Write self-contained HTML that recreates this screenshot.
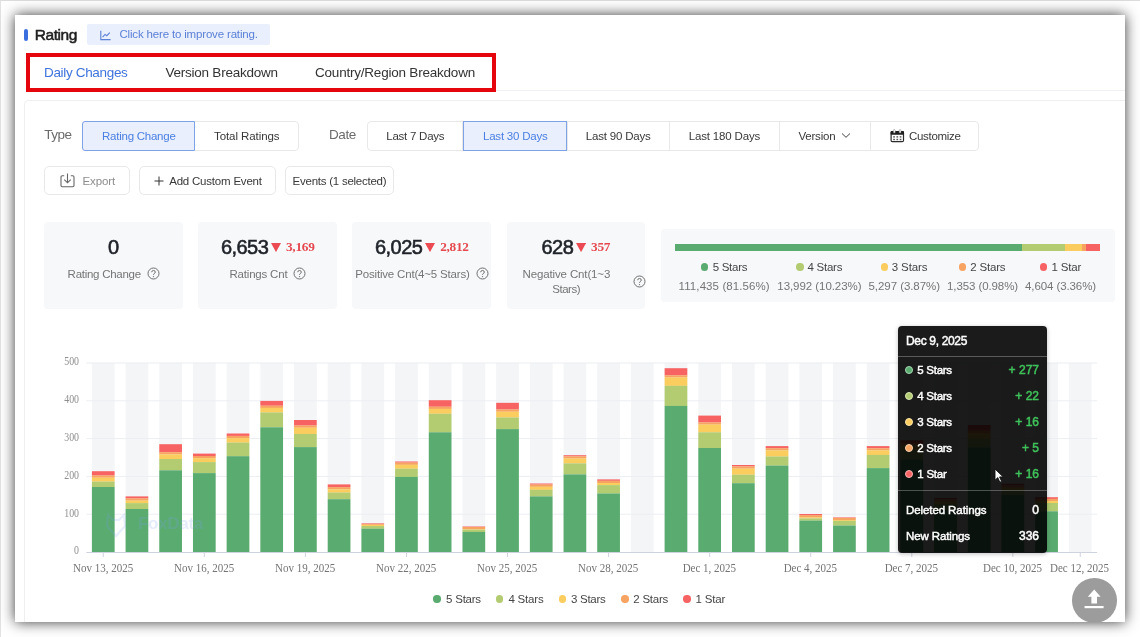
<!DOCTYPE html>
<html lang="en"><head><meta charset="utf-8"><title>Rating</title>
<style>
html,body{margin:0;padding:0}
body{width:1140px;height:637px;overflow:hidden;background:#fff;position:relative;font-family:"Liberation Sans", sans-serif}
.frame{position:absolute;left:0;top:0;width:1140px;height:637px;box-sizing:border-box;border-top:1px solid #dcdcdc;border-left:1px solid #e2e2e2}
.shadow{position:absolute;left:15px;top:15px;width:1110.4px;height:607px;background:#fff;box-shadow:0 0 13px rgba(0,0,0,0.78)}
.clip{position:absolute;left:15px;top:15px;width:1110.4px;height:607px;overflow:hidden}
.inner{position:absolute;left:-15px;top:-15px;width:1140px;height:637px;filter:blur(0.4px)}
.t{position:absolute;white-space:nowrap;line-height:20px;height:20px}
.z3{z-index:3} .z7{z-index:7}
</style></head><body>
<div class="frame"></div>
<div class="shadow"></div>
<div class="clip"><div class="inner">
<div style='position:absolute;left:24.3px;top:28.5px;width:3.5px;height:12px;border-radius:2px;background:#3b6fe0'></div>
<div style='position:absolute;left:86.7px;top:24.3px;width:183.8px;height:21.2px;border-radius:2px;background:#e9effc'></div>
<svg style='position:absolute;left:100px;top:29.5px' width='11' height='11' viewBox='0 0 11 11'><path d='M0.8 0.8V9.6H10.6' fill='none' stroke='#5b80d6' stroke-width='1.1'/><path d='M2.6 7.2L5 4.4L6.8 5.7L9.8 2.6' fill='none' stroke='#5b80d6' stroke-width='1.1'/></svg>
<div style='position:absolute;left:495px;top:90px;width:640px;height:1px;background:#f0f0f7'></div>
<div style='position:absolute;left:23.8px;top:100px;width:1110px;height:560px;border:1px solid #efefef;border-radius:4px'></div>
<div style='position:absolute;left:26px;top:53.1px;width:469.6px;height:39.4px;box-sizing:border-box;border:4.4px solid #e5050c'></div>
<div style='position:absolute;left:194px;top:121.4px;width:104.69999999999999px;height:29.599999999999994px;box-sizing:border-box;border:1px solid #e8e8e8;background:#fff;border-radius:0 4px 4px 0'></div>
<div style='position:absolute;left:82.2px;top:121.4px;width:112.8px;height:29.599999999999994px;box-sizing:border-box;border:1px solid #7fa2e6;background:#e9effd;border-radius:3px 0 0 3px;z-index:2'></div>
<div style='position:absolute;left:366.6px;top:121.4px;width:96.89999999999998px;height:29.599999999999994px;box-sizing:border-box;border:1px solid #e8e8e8;background:#fff;border-radius:4px 0 0 4px'></div>
<div style='position:absolute;left:566.5px;top:121.4px;width:103.5px;height:29.599999999999994px;box-sizing:border-box;border:1px solid #e8e8e8;background:#fff;border-radius:0'></div>
<div style='position:absolute;left:669px;top:121.4px;width:111px;height:29.599999999999994px;box-sizing:border-box;border:1px solid #e8e8e8;background:#fff;border-radius:0'></div>
<div style='position:absolute;left:779px;top:121.4px;width:92px;height:29.599999999999994px;box-sizing:border-box;border:1px solid #e8e8e8;background:#fff;border-radius:0'></div>
<div style='position:absolute;left:870px;top:121.4px;width:109.29999999999995px;height:29.599999999999994px;box-sizing:border-box;border:1px solid #e8e8e8;background:#fff;border-radius:0 4px 4px 0'></div>
<div style='position:absolute;left:463px;top:121.4px;width:104px;height:29.599999999999994px;box-sizing:border-box;border:1px solid #7fa2e6;background:#e9effd;border-radius:0;z-index:2'></div>
<svg style='position:absolute;left:841px;top:132px' width='10' height='7' viewBox='0 0 10 7'><path d='M1 1.5L5 5.3L9 1.5' fill='none' stroke='#444' stroke-width='1'/></svg>
<svg style='position:absolute;left:889.5px;top:129px' width='15' height='14' viewBox='0 0 15 14'>
<rect x='1.1' y='2.6' width='12.4' height='10' rx='1.2' fill='#fff' stroke='#2b2b2b' stroke-width='1.2'/>
<rect x='0.6' y='2.1' width='13.4' height='3.6' rx='1' fill='#1e1e1e'/>
<rect x='3.4' y='0.6' width='1.8' height='3.4' rx='0.8' fill='#fff' stroke='#777' stroke-width='0.5'/><rect x='9.2' y='0.6' width='1.8' height='3.4' rx='0.8' fill='#fff' stroke='#777' stroke-width='0.5'/>
<g fill='#555'><rect x='3.2' y='7.2' width='1.7' height='1.4'/><rect x='6.45' y='7.2' width='1.7' height='1.4'/><rect x='9.7' y='7.2' width='1.7' height='1.4'/>
<rect x='3.2' y='9.8' width='1.7' height='1.4'/><rect x='6.45' y='9.8' width='1.7' height='1.4'/><rect x='9.7' y='9.8' width='1.7' height='1.4'/></g></svg>
<div style='position:absolute;left:44.2px;top:166px;width:85.8px;height:29px;box-sizing:border-box;border:1px solid #e8e8e8;background:#fff;border-radius:5px'></div>
<div style='position:absolute;left:138.5px;top:166px;width:137.8px;height:29px;box-sizing:border-box;border:1px solid #e8e8e8;background:#fff;border-radius:5px'></div>
<div style='position:absolute;left:284.7px;top:166px;width:109.30000000000001px;height:29px;box-sizing:border-box;border:1px solid #e8e8e8;background:#fff;border-radius:5px'></div>
<svg style='position:absolute;left:59.5px;top:173px' width='15' height='15' viewBox='0 0 15 15'>
<path d='M4.2 2.8H2.2Q1 2.8 1 4V12.6Q1 13.8 2.2 13.8H12.8Q14 13.8 14 12.6V4Q14 2.8 12.8 2.8H10.8' fill='none' stroke='#666' stroke-width='1.1'/>
<path d='M7.5 0.5V9.6M4.3 6.6L7.5 9.8L10.7 6.6' fill='none' stroke='#666' stroke-width='1.1'/></svg>
<svg style='position:absolute;left:153.5px;top:176px' width='10' height='10' viewBox='0 0 10 10'><path d='M5 0.5V9.5M0.5 5H9.5' stroke='#333' stroke-width='1' fill='none'/></svg>
<div style='position:absolute;left:44px;top:222.3px;width:139.3px;height:86.69999999999999px;background:#f7f8fa;border-radius:4px'></div>
<div style='position:absolute;left:198px;top:222.3px;width:139.3px;height:86.69999999999999px;background:#f7f8fa;border-radius:4px'></div>
<div style='position:absolute;left:352.3px;top:222.3px;width:138.7px;height:86.69999999999999px;background:#f7f8fa;border-radius:4px'></div>
<div style='position:absolute;left:507.3px;top:222.3px;width:138.2px;height:86.69999999999999px;background:#f7f8fa;border-radius:4px'></div>
<div style='position:absolute;left:661.3px;top:229.3px;width:453.29999999999995px;height:72.39999999999998px;background:#f7f8fa;border-radius:4px'></div>
<svg style='position:absolute;left:147.2px;top:267.1px' width='13' height='13' viewBox='0 0 13 13'><circle cx='6.5' cy='6.5' r='5.5' fill='none' stroke='#6e6e6e' stroke-width='1'/><path d='M4.7 5.2Q4.7 3.5 6.5 3.5Q8.3 3.5 8.3 5.1Q8.3 6.1 7.2 6.6Q6.5 7 6.5 7.9' fill='none' stroke='#6e6e6e' stroke-width='1'/><circle cx='6.5' cy='9.6' r='0.7' fill='#6e6e6e'/></svg>
<svg style='position:absolute;left:270.8px;top:242.6px' width='10.0' height='9.200000000000017' viewBox='0 0 10 9'><path d='M0 0H10L5 9Z' fill='#ec4a52'/></svg>
<svg style='position:absolute;left:293.4px;top:267.1px' width='13' height='13' viewBox='0 0 13 13'><circle cx='6.5' cy='6.5' r='5.5' fill='none' stroke='#6e6e6e' stroke-width='1'/><path d='M4.7 5.2Q4.7 3.5 6.5 3.5Q8.3 3.5 8.3 5.1Q8.3 6.1 7.2 6.6Q6.5 7 6.5 7.9' fill='none' stroke='#6e6e6e' stroke-width='1'/><circle cx='6.5' cy='9.6' r='0.7' fill='#6e6e6e'/></svg>
<svg style='position:absolute;left:424.7px;top:242.6px' width='10.0' height='9.200000000000017' viewBox='0 0 10 9'><path d='M0 0H10L5 9Z' fill='#ec4a52'/></svg>
<svg style='position:absolute;left:476.1px;top:267.1px' width='13' height='13' viewBox='0 0 13 13'><circle cx='6.5' cy='6.5' r='5.5' fill='none' stroke='#6e6e6e' stroke-width='1'/><path d='M4.7 5.2Q4.7 3.5 6.5 3.5Q8.3 3.5 8.3 5.1Q8.3 6.1 7.2 6.6Q6.5 7 6.5 7.9' fill='none' stroke='#6e6e6e' stroke-width='1'/><circle cx='6.5' cy='9.6' r='0.7' fill='#6e6e6e'/></svg>
<svg style='position:absolute;left:576.2px;top:242.6px' width='10.099999999999909' height='9.200000000000017' viewBox='0 0 10 9'><path d='M0 0H10L5 9Z' fill='#ec4a52'/></svg>
<svg style='position:absolute;left:632.7px;top:274.5px' width='13' height='13' viewBox='0 0 13 13'><circle cx='6.5' cy='6.5' r='5.5' fill='none' stroke='#6e6e6e' stroke-width='1'/><path d='M4.7 5.2Q4.7 3.5 6.5 3.5Q8.3 3.5 8.3 5.1Q8.3 6.1 7.2 6.6Q6.5 7 6.5 7.9' fill='none' stroke='#6e6e6e' stroke-width='1'/><circle cx='6.5' cy='9.6' r='0.7' fill='#6e6e6e'/></svg>
<div style='position:absolute;left:675px;top:243.6px;width:346.9px;height:7.6px;background:#5aab70'></div>
<div style='position:absolute;left:1021.6px;top:243.6px;width:43.8px;height:7.6px;background:#b3cc71'></div>
<div style='position:absolute;left:1065.1px;top:243.6px;width:16.7px;height:7.6px;background:#facd5e'></div>
<div style='position:absolute;left:1081.5px;top:243.6px;width:4.5px;height:7.6px;background:#f7a362'></div>
<div style='position:absolute;left:1085.7px;top:243.6px;width:14.6px;height:7.6px;background:#f76363'></div>
<div style='position:absolute;left:700.9px;top:263.3px;width:7.4px;height:7.4px;border-radius:50%;background:#5aab70'></div>
<div style='position:absolute;left:796.3px;top:263.3px;width:7.4px;height:7.4px;border-radius:50%;background:#b3cc71'></div>
<div style='position:absolute;left:881.0px;top:263.3px;width:7.4px;height:7.4px;border-radius:50%;background:#facd5e'></div>
<div style='position:absolute;left:959.0999999999999px;top:263.3px;width:7.4px;height:7.4px;border-radius:50%;background:#f7a362'></div>
<div style='position:absolute;left:1039.8px;top:263.3px;width:7.4px;height:7.4px;border-radius:50%;background:#f76363'></div>
<svg style='position:absolute;left:0;top:0' width='1140' height='637' viewBox='0 0 1140 637' shape-rendering='auto'>
<rect x='91.90' y='363.0' width='22.7' height='189.0' fill='#f4f5f7'/>
<rect x='125.59' y='363.0' width='22.7' height='189.0' fill='#f4f5f7'/>
<rect x='159.28' y='363.0' width='22.7' height='189.0' fill='#f4f5f7'/>
<rect x='192.97' y='363.0' width='22.7' height='189.0' fill='#f4f5f7'/>
<rect x='226.66' y='363.0' width='22.7' height='189.0' fill='#f4f5f7'/>
<rect x='260.34' y='363.0' width='22.7' height='189.0' fill='#f4f5f7'/>
<rect x='294.03' y='363.0' width='22.7' height='189.0' fill='#f4f5f7'/>
<rect x='327.72' y='363.0' width='22.7' height='189.0' fill='#f4f5f7'/>
<rect x='361.41' y='363.0' width='22.7' height='189.0' fill='#f4f5f7'/>
<rect x='395.10' y='363.0' width='22.7' height='189.0' fill='#f4f5f7'/>
<rect x='428.79' y='363.0' width='22.7' height='189.0' fill='#f4f5f7'/>
<rect x='462.48' y='363.0' width='22.7' height='189.0' fill='#f4f5f7'/>
<rect x='496.17' y='363.0' width='22.7' height='189.0' fill='#f4f5f7'/>
<rect x='529.86' y='363.0' width='22.7' height='189.0' fill='#f4f5f7'/>
<rect x='563.55' y='363.0' width='22.7' height='189.0' fill='#f4f5f7'/>
<rect x='597.24' y='363.0' width='22.7' height='189.0' fill='#f4f5f7'/>
<rect x='630.93' y='363.0' width='22.7' height='189.0' fill='#f4f5f7'/>
<rect x='664.62' y='363.0' width='22.7' height='189.0' fill='#f4f5f7'/>
<rect x='698.31' y='363.0' width='22.7' height='189.0' fill='#f4f5f7'/>
<rect x='732.00' y='363.0' width='22.7' height='189.0' fill='#f4f5f7'/>
<rect x='765.69' y='363.0' width='22.7' height='189.0' fill='#f4f5f7'/>
<rect x='799.38' y='363.0' width='22.7' height='189.0' fill='#f4f5f7'/>
<rect x='833.07' y='363.0' width='22.7' height='189.0' fill='#f4f5f7'/>
<rect x='866.76' y='363.0' width='22.7' height='189.0' fill='#f4f5f7'/>
<rect x='900.45' y='363.0' width='22.7' height='189.0' fill='#f4f5f7'/>
<rect x='934.14' y='363.0' width='22.7' height='189.0' fill='#f4f5f7'/>
<rect x='967.83' y='363.0' width='22.7' height='189.0' fill='#f4f5f7'/>
<rect x='1001.52' y='363.0' width='22.7' height='189.0' fill='#f4f5f7'/>
<rect x='1035.22' y='363.0' width='22.7' height='189.0' fill='#f4f5f7'/>
<rect x='1068.90' y='363.0' width='22.7' height='189.0' fill='#f4f5f7'/>
<rect x='86.4' y='513.70' width='1010.7' height='1' fill='#eceef2'/>
<rect x='86.4' y='475.90' width='1010.7' height='1' fill='#eceef2'/>
<rect x='86.4' y='438.10' width='1010.7' height='1' fill='#eceef2'/>
<rect x='86.4' y='400.30' width='1010.7' height='1' fill='#eceef2'/>
<rect x='86.4' y='362.50' width='1010.7' height='1' fill='#eceef2'/>
<rect x='91.90' y='471.20' width='22.7' height='4.35' fill='#f76363'/>
<rect x='91.90' y='475.50' width='22.7' height='2.25' fill='#f7a362'/>
<rect x='91.90' y='477.70' width='22.7' height='3.95' fill='#facd5e'/>
<rect x='91.90' y='481.60' width='22.7' height='5.45' fill='#b3cc71'/>
<rect x='91.90' y='487.00' width='22.7' height='65.05' fill='#5aab70'/>
<rect x='125.59' y='496.40' width='22.7' height='2.05' fill='#f76363'/>
<rect x='125.59' y='498.40' width='22.7' height='2.25' fill='#f7a362'/>
<rect x='125.59' y='500.60' width='22.7' height='2.55' fill='#facd5e'/>
<rect x='125.59' y='503.10' width='22.7' height='5.95' fill='#b3cc71'/>
<rect x='125.59' y='509.00' width='22.7' height='43.05' fill='#5aab70'/>
<rect x='159.28' y='444.20' width='22.7' height='8.05' fill='#f76363'/>
<rect x='159.28' y='452.20' width='22.7' height='2.25' fill='#f7a362'/>
<rect x='159.28' y='454.40' width='22.7' height='4.65' fill='#facd5e'/>
<rect x='159.28' y='459.00' width='22.7' height='11.35' fill='#b3cc71'/>
<rect x='159.28' y='470.30' width='22.7' height='81.75' fill='#5aab70'/>
<rect x='192.97' y='453.60' width='22.7' height='2.45' fill='#f76363'/>
<rect x='192.97' y='456.00' width='22.7' height='2.25' fill='#f7a362'/>
<rect x='192.97' y='458.20' width='22.7' height='3.95' fill='#facd5e'/>
<rect x='192.97' y='462.10' width='22.7' height='11.05' fill='#b3cc71'/>
<rect x='192.97' y='473.10' width='22.7' height='78.95' fill='#5aab70'/>
<rect x='226.66' y='433.50' width='22.7' height='2.45' fill='#f76363'/>
<rect x='226.66' y='435.90' width='22.7' height='2.25' fill='#f7a362'/>
<rect x='226.66' y='438.10' width='22.7' height='4.55' fill='#facd5e'/>
<rect x='226.66' y='442.60' width='22.7' height='13.65' fill='#b3cc71'/>
<rect x='226.66' y='456.20' width='22.7' height='95.85' fill='#5aab70'/>
<rect x='260.34' y='400.90' width='22.7' height='4.85' fill='#f76363'/>
<rect x='260.34' y='405.70' width='22.7' height='2.25' fill='#f7a362'/>
<rect x='260.34' y='407.90' width='22.7' height='4.65' fill='#facd5e'/>
<rect x='260.34' y='412.50' width='22.7' height='14.85' fill='#b3cc71'/>
<rect x='260.34' y='427.30' width='22.7' height='124.75' fill='#5aab70'/>
<rect x='294.03' y='420.00' width='22.7' height='5.55' fill='#f76363'/>
<rect x='294.03' y='425.50' width='22.7' height='2.25' fill='#f7a362'/>
<rect x='294.03' y='427.70' width='22.7' height='6.25' fill='#facd5e'/>
<rect x='294.03' y='433.90' width='22.7' height='13.25' fill='#b3cc71'/>
<rect x='294.03' y='447.10' width='22.7' height='104.95' fill='#5aab70'/>
<rect x='327.72' y='484.40' width='22.7' height='2.75' fill='#f76363'/>
<rect x='327.72' y='487.10' width='22.7' height='2.25' fill='#f7a362'/>
<rect x='327.72' y='489.30' width='22.7' height='3.35' fill='#facd5e'/>
<rect x='327.72' y='492.60' width='22.7' height='6.65' fill='#b3cc71'/>
<rect x='327.72' y='499.20' width='22.7' height='52.85' fill='#5aab70'/>
<rect x='361.41' y='523.40' width='22.7' height='0.75' fill='#f76363'/>
<rect x='361.41' y='524.10' width='22.7' height='0.85' fill='#f7a362'/>
<rect x='361.41' y='524.90' width='22.7' height='1.15' fill='#facd5e'/>
<rect x='361.41' y='526.00' width='22.7' height='2.75' fill='#b3cc71'/>
<rect x='361.41' y='528.70' width='22.7' height='23.35' fill='#5aab70'/>
<rect x='395.10' y='461.50' width='22.7' height='1.15' fill='#f76363'/>
<rect x='395.10' y='462.60' width='22.7' height='2.25' fill='#f7a362'/>
<rect x='395.10' y='464.80' width='22.7' height='3.95' fill='#facd5e'/>
<rect x='395.10' y='468.70' width='22.7' height='8.25' fill='#b3cc71'/>
<rect x='395.10' y='476.90' width='22.7' height='75.15' fill='#5aab70'/>
<rect x='428.79' y='400.20' width='22.7' height='6.55' fill='#f76363'/>
<rect x='428.79' y='406.70' width='22.7' height='2.25' fill='#f7a362'/>
<rect x='428.79' y='408.90' width='22.7' height='4.85' fill='#facd5e'/>
<rect x='428.79' y='413.70' width='22.7' height='18.65' fill='#b3cc71'/>
<rect x='428.79' y='432.30' width='22.7' height='119.75' fill='#5aab70'/>
<rect x='462.48' y='526.50' width='22.7' height='0.55' fill='#f76363'/>
<rect x='462.48' y='527.00' width='22.7' height='2.25' fill='#f7a362'/>
<rect x='462.48' y='529.20' width='22.7' height='0.55' fill='#facd5e'/>
<rect x='462.48' y='529.70' width='22.7' height='2.25' fill='#b3cc71'/>
<rect x='462.48' y='531.90' width='22.7' height='20.15' fill='#5aab70'/>
<rect x='496.17' y='402.80' width='22.7' height='6.75' fill='#f76363'/>
<rect x='496.17' y='409.50' width='22.7' height='2.25' fill='#f7a362'/>
<rect x='496.17' y='411.70' width='22.7' height='5.85' fill='#facd5e'/>
<rect x='496.17' y='417.50' width='22.7' height='11.65' fill='#b3cc71'/>
<rect x='496.17' y='429.10' width='22.7' height='122.95' fill='#5aab70'/>
<rect x='529.86' y='483.50' width='22.7' height='1.15' fill='#f76363'/>
<rect x='529.86' y='484.60' width='22.7' height='2.25' fill='#f7a362'/>
<rect x='529.86' y='486.80' width='22.7' height='3.05' fill='#facd5e'/>
<rect x='529.86' y='489.80' width='22.7' height='6.65' fill='#b3cc71'/>
<rect x='529.86' y='496.40' width='22.7' height='55.65' fill='#5aab70'/>
<rect x='563.55' y='455.20' width='22.7' height='1.15' fill='#f76363'/>
<rect x='563.55' y='456.30' width='22.7' height='2.25' fill='#f7a362'/>
<rect x='563.55' y='458.50' width='22.7' height='4.95' fill='#facd5e'/>
<rect x='563.55' y='463.40' width='22.7' height='11.05' fill='#b3cc71'/>
<rect x='563.55' y='474.40' width='22.7' height='77.65' fill='#5aab70'/>
<rect x='597.24' y='479.40' width='22.7' height='1.45' fill='#f76363'/>
<rect x='597.24' y='480.80' width='22.7' height='2.25' fill='#f7a362'/>
<rect x='597.24' y='483.00' width='22.7' height='2.15' fill='#facd5e'/>
<rect x='597.24' y='485.10' width='22.7' height='8.45' fill='#b3cc71'/>
<rect x='597.24' y='493.50' width='22.7' height='58.55' fill='#5aab70'/>
<rect x='664.62' y='368.20' width='22.7' height='7.15' fill='#f76363'/>
<rect x='664.62' y='375.30' width='22.7' height='2.25' fill='#f7a362'/>
<rect x='664.62' y='377.50' width='22.7' height='8.35' fill='#facd5e'/>
<rect x='664.62' y='385.80' width='22.7' height='20.15' fill='#b3cc71'/>
<rect x='664.62' y='405.90' width='22.7' height='146.15' fill='#5aab70'/>
<rect x='698.31' y='415.60' width='22.7' height='6.85' fill='#f76363'/>
<rect x='698.31' y='422.40' width='22.7' height='2.25' fill='#f7a362'/>
<rect x='698.31' y='424.60' width='22.7' height='7.75' fill='#facd5e'/>
<rect x='698.31' y='432.30' width='22.7' height='15.75' fill='#b3cc71'/>
<rect x='698.31' y='448.00' width='22.7' height='104.05' fill='#5aab70'/>
<rect x='732.00' y='465.00' width='22.7' height='1.45' fill='#f76363'/>
<rect x='732.00' y='466.40' width='22.7' height='2.25' fill='#f7a362'/>
<rect x='732.00' y='468.60' width='22.7' height='6.15' fill='#facd5e'/>
<rect x='732.00' y='474.70' width='22.7' height='8.55' fill='#b3cc71'/>
<rect x='732.00' y='483.20' width='22.7' height='68.85' fill='#5aab70'/>
<rect x='765.69' y='446.10' width='22.7' height='2.15' fill='#f76363'/>
<rect x='765.69' y='448.20' width='22.7' height='2.25' fill='#f7a362'/>
<rect x='765.69' y='450.40' width='22.7' height='6.15' fill='#facd5e'/>
<rect x='765.69' y='456.50' width='22.7' height='9.15' fill='#b3cc71'/>
<rect x='765.69' y='465.60' width='22.7' height='86.45' fill='#5aab70'/>
<rect x='799.38' y='514.00' width='22.7' height='1.15' fill='#f76363'/>
<rect x='799.38' y='515.10' width='22.7' height='2.25' fill='#f7a362'/>
<rect x='799.38' y='517.30' width='22.7' height='1.15' fill='#facd5e'/>
<rect x='799.38' y='518.40' width='22.7' height='2.25' fill='#b3cc71'/>
<rect x='799.38' y='520.60' width='22.7' height='31.45' fill='#5aab70'/>
<rect x='833.07' y='517.40' width='22.7' height='0.55' fill='#f76363'/>
<rect x='833.07' y='517.90' width='22.7' height='2.25' fill='#f7a362'/>
<rect x='833.07' y='520.10' width='22.7' height='0.85' fill='#facd5e'/>
<rect x='833.07' y='520.90' width='22.7' height='4.75' fill='#b3cc71'/>
<rect x='833.07' y='525.60' width='22.7' height='26.45' fill='#5aab70'/>
<rect x='866.76' y='446.10' width='22.7' height='2.15' fill='#f76363'/>
<rect x='866.76' y='448.20' width='22.7' height='2.25' fill='#f7a362'/>
<rect x='866.76' y='450.40' width='22.7' height='4.55' fill='#facd5e'/>
<rect x='866.76' y='454.90' width='22.7' height='13.25' fill='#b3cc71'/>
<rect x='866.76' y='468.10' width='22.7' height='83.95' fill='#5aab70'/>
<rect x='900.45' y='440.30' width='22.7' height='2.65' fill='#f76363'/>
<rect x='900.45' y='442.90' width='22.7' height='2.25' fill='#f7a362'/>
<rect x='900.45' y='445.10' width='22.7' height='4.95' fill='#facd5e'/>
<rect x='900.45' y='450.00' width='22.7' height='9.55' fill='#b3cc71'/>
<rect x='900.45' y='459.50' width='22.7' height='92.55' fill='#5aab70'/>
<rect x='934.14' y='498.00' width='22.7' height='1.45' fill='#f76363'/>
<rect x='934.14' y='499.40' width='22.7' height='2.25' fill='#f7a362'/>
<rect x='934.14' y='501.60' width='22.7' height='2.45' fill='#facd5e'/>
<rect x='934.14' y='504.00' width='22.7' height='6.05' fill='#b3cc71'/>
<rect x='934.14' y='510.00' width='22.7' height='42.05' fill='#5aab70'/>
<rect x='967.83' y='425.00' width='22.7' height='5.85' fill='#f76363'/>
<rect x='967.83' y='430.80' width='22.7' height='2.25' fill='#f7a362'/>
<rect x='967.83' y='433.00' width='22.7' height='6.05' fill='#facd5e'/>
<rect x='967.83' y='439.00' width='22.7' height='8.35' fill='#b3cc71'/>
<rect x='967.83' y='447.30' width='22.7' height='104.75' fill='#5aab70'/>
<rect x='1001.52' y='483.70' width='22.7' height='1.75' fill='#f76363'/>
<rect x='1001.52' y='485.40' width='22.7' height='2.25' fill='#f7a362'/>
<rect x='1001.52' y='487.60' width='22.7' height='2.45' fill='#facd5e'/>
<rect x='1001.52' y='490.00' width='22.7' height='5.05' fill='#b3cc71'/>
<rect x='1001.52' y='495.00' width='22.7' height='57.05' fill='#5aab70'/>
<rect x='1035.22' y='497.20' width='22.7' height='1.75' fill='#f76363'/>
<rect x='1035.22' y='498.90' width='22.7' height='2.25' fill='#f7a362'/>
<rect x='1035.22' y='501.10' width='22.7' height='1.95' fill='#facd5e'/>
<rect x='1035.22' y='503.00' width='22.7' height='8.35' fill='#b3cc71'/>
<rect x='1035.22' y='511.30' width='22.7' height='40.75' fill='#5aab70'/>
<rect x='86.4' y='552.0' width='1010.7' height='1' fill='#cfd3de'/>
<rect x='102.75' y='553.0' width='1' height='4' fill='#cfd3de'/>
<rect x='203.81' y='553.0' width='1' height='4' fill='#cfd3de'/>
<rect x='304.88' y='553.0' width='1' height='4' fill='#cfd3de'/>
<rect x='405.95' y='553.0' width='1' height='4' fill='#cfd3de'/>
<rect x='507.02' y='553.0' width='1' height='4' fill='#cfd3de'/>
<rect x='608.09' y='553.0' width='1' height='4' fill='#cfd3de'/>
<rect x='709.16' y='553.0' width='1' height='4' fill='#cfd3de'/>
<rect x='810.23' y='553.0' width='1' height='4' fill='#cfd3de'/>
<rect x='911.30' y='553.0' width='1' height='4' fill='#cfd3de'/>
<rect x='1012.37' y='553.0' width='1' height='4' fill='#cfd3de'/>
<rect x='1079.75' y='553.0' width='1' height='4' fill='#cfd3de'/>
</svg>
<div style='position:absolute;left:138px;top:514px;font:600 17px "Liberation Sans",sans-serif;color:#7aa0f0;opacity:0.2;letter-spacing:-0.3px'>FoxData</div>
<svg style='position:absolute;left:104px;top:512px;opacity:0.18' width='24' height='26' viewBox='0 0 24 26'><path d='M4 3L9 8H15L20 3L21 14L12 24L3 14Z' fill='none' stroke='#7aa0f0' stroke-width='2.2'/></svg>
<div style='position:absolute;left:433.40000000000003px;top:595.4px;width:7.4px;height:7.4px;border-radius:50%;background:#5aab70'></div>
<div style='position:absolute;left:496.0px;top:595.4px;width:7.4px;height:7.4px;border-radius:50%;background:#b3cc71'></div>
<div style='position:absolute;left:558.9px;top:595.4px;width:7.4px;height:7.4px;border-radius:50%;background:#facd5e'></div>
<div style='position:absolute;left:621.1999999999999px;top:595.4px;width:7.4px;height:7.4px;border-radius:50%;background:#f7a362'></div>
<div style='position:absolute;left:683.3px;top:595.4px;width:7.4px;height:7.4px;border-radius:50%;background:#f76363'></div>
<div style='position:absolute;left:898.4px;top:325.8px;width:148.4px;height:226.8px;background:rgba(0,0,0,0.895);border-radius:4px;z-index:5;box-shadow:0 1px 4px rgba(0,0,0,0.25)'></div>
<div style='position:absolute;left:898.4px;top:356px;width:148.4px;height:1px;background:rgba(255,255,255,0.28);z-index:6'></div>
<div style='position:absolute;left:898.4px;top:490.4px;width:148.4px;height:1px;background:rgba(255,255,255,0.28);z-index:6'></div>
<div style='position:absolute;left:905px;top:366px;width:8px;height:8px;box-sizing:border-box;border-radius:50%;background:#5aab70;border:1px solid #a9d6b4;z-index:7'></div>
<div style='position:absolute;left:905px;top:391.8px;width:8px;height:8px;box-sizing:border-box;border-radius:50%;background:#b3cc71;border:1px solid #dbe8b5;z-index:7'></div>
<div style='position:absolute;left:905px;top:417.5px;width:8px;height:8px;box-sizing:border-box;border-radius:50%;background:#facd5e;border:1px solid #fde7ae;z-index:7'></div>
<div style='position:absolute;left:905px;top:443.6px;width:8px;height:8px;box-sizing:border-box;border-radius:50%;background:#f7a362;border:1px solid #fbd3b0;z-index:7'></div>
<div style='position:absolute;left:905px;top:469.5px;width:8px;height:8px;box-sizing:border-box;border-radius:50%;background:#f76363;border:1px solid #f9b3b3;z-index:7'></div>
<svg style='position:absolute;left:993.5px;top:467.5px;z-index:8' width='11' height='16' viewBox='0 0 11 16'><path d='M1 1V12.2L3.8 9.6L5.8 14.2L7.6 13.4L5.6 8.9H9.2Z' fill='#fff' stroke='#111' stroke-width='0.9' stroke-linejoin='round'/></svg>
<div style='position:absolute;left:1072.1px;top:578px;width:44.6px;height:44.6px;border-radius:50%;background:#9c9c9c'></div>
<svg style='position:absolute;left:1072.1px;top:578px' width='44.6' height='44.6' viewBox='0 0 44.6 44.6'><path d='M22.2 11.6L28.6 18.8H25V25.4H19.4V18.8H15.8Z' fill='#fff'/><rect x='12.6' y='28' width='19' height='2.2' fill='#fff'/></svg>
<span class='t ' style='left:34.70px;top:24.60px;font-family:"Liberation Sans", sans-serif;font-size:15.5px;font-weight:400;color:#1f1f1f;letter-spacing:-0.435px;-webkit-text-stroke:0.55px #1f1f1f'>Rating</span>
<span class='t ' style='left:119.40px;top:23.70px;font-family:"Liberation Sans", sans-serif;font-size:11.5px;font-weight:400;color:#5b80d6;letter-spacing:-0.165px'>Click here to improve rating.</span>
<span class='t ' style='left:44.00px;top:62.50px;font-family:"Liberation Sans", sans-serif;font-size:13.5px;font-weight:400;color:#3f73dc;letter-spacing:-0.331px'>Daily Changes</span>
<span class='t ' style='left:165.40px;top:62.50px;font-family:"Liberation Sans", sans-serif;font-size:13.5px;font-weight:400;color:#333;letter-spacing:-0.225px'>Version Breakdown</span>
<span class='t ' style='left:315.00px;top:62.50px;font-family:"Liberation Sans", sans-serif;font-size:13.5px;font-weight:400;color:#333;letter-spacing:-0.212px'>Country/Region Breakdown</span>
<span class='t ' style='left:44.20px;top:125.20px;font-family:"Liberation Sans", sans-serif;font-size:13.5px;font-weight:400;color:#6b6b6b;letter-spacing:-0.495px'>Type</span>
<span class='t z3' style='left:102.00px;top:125.60px;font-family:"Liberation Sans", sans-serif;font-size:11.5px;font-weight:400;color:#4b7fe0;letter-spacing:-0.241px'>Rating Change</span>
<span class='t ' style='left:214.00px;top:125.60px;font-family:"Liberation Sans", sans-serif;font-size:11.5px;font-weight:400;color:#383838;letter-spacing:-0.076px'>Total Ratings</span>
<span class='t ' style='left:329.00px;top:125.00px;font-family:"Liberation Sans", sans-serif;font-size:13.5px;font-weight:400;color:#6b6b6b;letter-spacing:-0.383px'>Date</span>
<span class='t ' style='left:386.30px;top:125.60px;font-family:"Liberation Sans", sans-serif;font-size:11.5px;font-weight:400;color:#383838;letter-spacing:-0.249px'>Last 7 Days</span>
<span class='t z3' style='left:483.00px;top:125.60px;font-family:"Liberation Sans", sans-serif;font-size:11.5px;font-weight:400;color:#4b7fe0;letter-spacing:-0.219px'>Last 30 Days</span>
<span class='t ' style='left:585.70px;top:125.60px;font-family:"Liberation Sans", sans-serif;font-size:11.5px;font-weight:400;color:#383838;letter-spacing:-0.177px'>Last 90 Days</span>
<span class='t ' style='left:688.70px;top:125.60px;font-family:"Liberation Sans", sans-serif;font-size:11.5px;font-weight:400;color:#383838;letter-spacing:-0.155px'>Last 180 Days</span>
<span class='t ' style='left:798.40px;top:125.60px;font-family:"Liberation Sans", sans-serif;font-size:11.5px;font-weight:400;color:#383838;letter-spacing:-0.194px'>Version</span>
<span class='t ' style='left:909.00px;top:125.60px;font-family:"Liberation Sans", sans-serif;font-size:11.5px;font-weight:400;color:#383838;letter-spacing:-0.314px'>Customize</span>
<span class='t ' style='left:82.40px;top:170.60px;font-family:"Liberation Sans", sans-serif;font-size:11.5px;font-weight:400;color:#8c8c8c;letter-spacing:-0.075px'>Export</span>
<span class='t ' style='left:169.20px;top:170.60px;font-family:"Liberation Sans", sans-serif;font-size:11.5px;font-weight:400;color:#383838;letter-spacing:-0.206px'>Add Custom Event</span>
<span class='t ' style='left:292.60px;top:170.60px;font-family:"Liberation Sans", sans-serif;font-size:11.5px;font-weight:400;color:#383838;letter-spacing:-0.249px'>Events (1 selected)</span>
<span class='t ' style='left:107.90px;top:237.30px;font-family:"Liberation Sans", sans-serif;font-size:20px;font-weight:400;color:#1f2329;letter-spacing:0.000px;-webkit-text-stroke:0.6px #1f2329'>0</span>
<span class='t ' style='left:67.60px;top:264.20px;font-family:"Liberation Sans", sans-serif;font-size:11.5px;font-weight:400;color:#757575;letter-spacing:-0.272px'>Rating Change</span>
<span class='t ' style='left:221.00px;top:237.30px;font-family:"Liberation Sans", sans-serif;font-size:20px;font-weight:400;color:#1f2329;letter-spacing:-0.572px;-webkit-text-stroke:0.6px #1f2329'>6,653</span>
<span class='t ' style='left:286.00px;top:236.90px;font-family:"Liberation Serif", serif;font-size:13.3px;font-weight:700;color:#e5484f;letter-spacing:-0.284px'>3,169</span>
<span class='t ' style='left:229.50px;top:264.20px;font-family:"Liberation Sans", sans-serif;font-size:11.5px;font-weight:400;color:#757575;letter-spacing:-0.199px'>Ratings Cnt</span>
<span class='t ' style='left:374.90px;top:237.30px;font-family:"Liberation Sans", sans-serif;font-size:20px;font-weight:400;color:#1f2329;letter-spacing:-0.492px;-webkit-text-stroke:0.6px #1f2329'>6,025</span>
<span class='t ' style='left:440.20px;top:236.90px;font-family:"Liberation Serif", serif;font-size:13.3px;font-weight:700;color:#e5484f;letter-spacing:-0.284px'>2,812</span>
<span class='t ' style='left:355.30px;top:264.20px;font-family:"Liberation Sans", sans-serif;font-size:11.5px;font-weight:400;color:#757575;letter-spacing:-0.185px'>Positive Cnt(4~5 Stars)</span>
<span class='t ' style='left:541.40px;top:237.30px;font-family:"Liberation Sans", sans-serif;font-size:20px;font-weight:400;color:#1f2329;letter-spacing:-0.458px;-webkit-text-stroke:0.6px #1f2329'>628</span>
<span class='t ' style='left:591.10px;top:236.90px;font-family:"Liberation Serif", serif;font-size:13.3px;font-weight:700;color:#e5484f;letter-spacing:-0.284px'>357</span>
<span class='t ' style='left:522.60px;top:264.20px;font-family:"Liberation Sans", sans-serif;font-size:11.5px;font-weight:400;color:#757575;letter-spacing:-0.139px'>Negative Cnt(1~3</span>
<span class='t ' style='left:552.20px;top:279.20px;font-family:"Liberation Sans", sans-serif;font-size:11.5px;font-weight:400;color:#757575;letter-spacing:-0.445px'>Stars)</span>
<span class='t ' style='left:712.70px;top:257.20px;font-family:"Liberation Sans", sans-serif;font-size:11.5px;font-weight:400;color:#454545;letter-spacing:-0.277px'>5 Stars</span>
<span class='t ' style='left:678.60px;top:275.60px;font-family:"Liberation Sans", sans-serif;font-size:11.5px;font-weight:400;color:#757575;letter-spacing:0.092px'>111,435 (81.56%)</span>
<span class='t ' style='left:807.50px;top:257.20px;font-family:"Liberation Sans", sans-serif;font-size:11.5px;font-weight:400;color:#454545;letter-spacing:-0.248px'>4 Stars</span>
<span class='t ' style='left:777.30px;top:275.60px;font-family:"Liberation Sans", sans-serif;font-size:11.5px;font-weight:400;color:#757575;letter-spacing:-0.056px'>13,992 (10.23%)</span>
<span class='t ' style='left:891.80px;top:257.20px;font-family:"Liberation Sans", sans-serif;font-size:11.5px;font-weight:400;color:#454545;letter-spacing:-0.134px'>3 Stars</span>
<span class='t ' style='left:868.50px;top:275.60px;font-family:"Liberation Sans", sans-serif;font-size:11.5px;font-weight:400;color:#757575;letter-spacing:-0.058px'>5,297 (3.87%)</span>
<span class='t ' style='left:970.30px;top:257.20px;font-family:"Liberation Sans", sans-serif;font-size:11.5px;font-weight:400;color:#454545;letter-spacing:-0.191px'>2 Stars</span>
<span class='t ' style='left:947.00px;top:275.60px;font-family:"Liberation Sans", sans-serif;font-size:11.5px;font-weight:400;color:#757575;letter-spacing:-0.096px'>1,353 (0.98%)</span>
<span class='t ' style='left:1051.40px;top:257.20px;font-family:"Liberation Sans", sans-serif;font-size:11.5px;font-weight:400;color:#454545;letter-spacing:-0.148px'>1 Star</span>
<span class='t ' style='left:1025.00px;top:275.60px;font-family:"Liberation Sans", sans-serif;font-size:11.5px;font-weight:400;color:#757575;letter-spacing:-0.096px'>4,604 (3.36%)</span>
<span class='t ' style='left:68.54px;top:558.30px;font-family:"Liberation Serif", serif;font-size:12.5px;font-weight:400;color:#747474;letter-spacing:0.000px;transform:scaleX(0.88);transform-origin:center center'>Nov 13, 2025</span>
<span class='t ' style='left:169.61px;top:558.30px;font-family:"Liberation Serif", serif;font-size:12.5px;font-weight:400;color:#747474;letter-spacing:0.000px;transform:scaleX(0.88);transform-origin:center center'>Nov 16, 2025</span>
<span class='t ' style='left:270.68px;top:558.30px;font-family:"Liberation Serif", serif;font-size:12.5px;font-weight:400;color:#747474;letter-spacing:0.000px;transform:scaleX(0.88);transform-origin:center center'>Nov 19, 2025</span>
<span class='t ' style='left:371.75px;top:558.30px;font-family:"Liberation Serif", serif;font-size:12.5px;font-weight:400;color:#747474;letter-spacing:0.000px;transform:scaleX(0.88);transform-origin:center center'>Nov 22, 2025</span>
<span class='t ' style='left:472.82px;top:558.30px;font-family:"Liberation Serif", serif;font-size:12.5px;font-weight:400;color:#747474;letter-spacing:0.000px;transform:scaleX(0.88);transform-origin:center center'>Nov 25, 2025</span>
<span class='t ' style='left:573.89px;top:558.30px;font-family:"Liberation Serif", serif;font-size:12.5px;font-weight:400;color:#747474;letter-spacing:0.000px;transform:scaleX(0.88);transform-origin:center center'>Nov 28, 2025</span>
<span class='t ' style='left:678.79px;top:558.30px;font-family:"Liberation Serif", serif;font-size:12.5px;font-weight:400;color:#747474;letter-spacing:0.000px;transform:scaleX(0.88);transform-origin:center center'>Dec 1, 2025</span>
<span class='t ' style='left:779.86px;top:558.30px;font-family:"Liberation Serif", serif;font-size:12.5px;font-weight:400;color:#747474;letter-spacing:0.000px;transform:scaleX(0.88);transform-origin:center center'>Dec 4, 2025</span>
<span class='t ' style='left:880.93px;top:558.30px;font-family:"Liberation Serif", serif;font-size:12.5px;font-weight:400;color:#747474;letter-spacing:0.000px;transform:scaleX(0.88);transform-origin:center center'>Dec 7, 2025</span>
<span class='t ' style='left:978.87px;top:558.30px;font-family:"Liberation Serif", serif;font-size:12.5px;font-weight:400;color:#747474;letter-spacing:0.000px;transform:scaleX(0.88);transform-origin:center center'>Dec 10, 2025</span>
<span class='t ' style='left:1046.30px;top:558.30px;font-family:"Liberation Serif", serif;font-size:12.5px;font-weight:400;color:#747474;letter-spacing:0.000px;transform:scaleX(0.88);transform-origin:center center'>Dec 12, 2025</span>
<span class='t ' style='left:72.80px;top:540.40px;font-family:"Liberation Serif", serif;font-size:12px;font-weight:400;color:#8f8f8f;letter-spacing:0.000px;transform:scaleX(0.82);transform-origin:right center'>0</span>
<span class='t ' style='left:60.80px;top:502.60px;font-family:"Liberation Serif", serif;font-size:12px;font-weight:400;color:#8f8f8f;letter-spacing:0.000px;transform:scaleX(0.82);transform-origin:right center'>100</span>
<span class='t ' style='left:60.80px;top:464.80px;font-family:"Liberation Serif", serif;font-size:12px;font-weight:400;color:#8f8f8f;letter-spacing:0.000px;transform:scaleX(0.82);transform-origin:right center'>200</span>
<span class='t ' style='left:60.80px;top:427.00px;font-family:"Liberation Serif", serif;font-size:12px;font-weight:400;color:#8f8f8f;letter-spacing:0.000px;transform:scaleX(0.82);transform-origin:right center'>300</span>
<span class='t ' style='left:60.80px;top:389.20px;font-family:"Liberation Serif", serif;font-size:12px;font-weight:400;color:#8f8f8f;letter-spacing:0.000px;transform:scaleX(0.82);transform-origin:right center'>400</span>
<span class='t ' style='left:60.80px;top:351.40px;font-family:"Liberation Serif", serif;font-size:12px;font-weight:400;color:#8f8f8f;letter-spacing:0.000px;transform:scaleX(0.82);transform-origin:right center'>500</span>
<span class='t ' style='left:446.10px;top:589.30px;font-family:"Liberation Sans", sans-serif;font-size:11.5px;font-weight:400;color:#454545;letter-spacing:-0.234px'>5 Stars</span>
<span class='t ' style='left:508.40px;top:589.30px;font-family:"Liberation Sans", sans-serif;font-size:11.5px;font-weight:400;color:#454545;letter-spacing:-0.191px'>4 Stars</span>
<span class='t ' style='left:571.00px;top:589.30px;font-family:"Liberation Sans", sans-serif;font-size:11.5px;font-weight:400;color:#454545;letter-spacing:-0.277px'>3 Stars</span>
<span class='t ' style='left:633.30px;top:589.30px;font-family:"Liberation Sans", sans-serif;font-size:11.5px;font-weight:400;color:#454545;letter-spacing:-0.234px'>2 Stars</span>
<span class='t ' style='left:695.60px;top:589.30px;font-family:"Liberation Sans", sans-serif;font-size:11.5px;font-weight:400;color:#454545;letter-spacing:-0.198px'>1 Star</span>
<span class='t z7' style='left:906.00px;top:330.60px;font-family:"Liberation Sans", sans-serif;font-size:12px;font-weight:400;color:#fff;letter-spacing:-0.338px;-webkit-text-stroke:0.45px #fff'>Dec 9, 2025</span>
<span class='t z7' style='left:917.30px;top:360.30px;font-family:"Liberation Sans", sans-serif;font-size:11.5px;font-weight:400;color:#fff;letter-spacing:-0.277px;-webkit-text-stroke:0.45px #fff'>5 Stars</span>
<span class='t z7' style='left:1008.62px;top:360.30px;font-family:"Liberation Sans", sans-serif;font-size:12px;font-weight:400;color:#3fc25a;letter-spacing:0.000px;-webkit-text-stroke:0.5px #3fc25a'>+ 277</span>
<span class='t z7' style='left:917.30px;top:386.10px;font-family:"Liberation Sans", sans-serif;font-size:11.5px;font-weight:400;color:#fff;letter-spacing:-0.277px;-webkit-text-stroke:0.45px #fff'>4 Stars</span>
<span class='t z7' style='left:1015.30px;top:386.10px;font-family:"Liberation Sans", sans-serif;font-size:12px;font-weight:400;color:#3fc25a;letter-spacing:0.000px;-webkit-text-stroke:0.5px #3fc25a'>+ 22</span>
<span class='t z7' style='left:917.30px;top:411.80px;font-family:"Liberation Sans", sans-serif;font-size:11.5px;font-weight:400;color:#fff;letter-spacing:-0.277px;-webkit-text-stroke:0.45px #fff'>3 Stars</span>
<span class='t z7' style='left:1015.30px;top:411.80px;font-family:"Liberation Sans", sans-serif;font-size:12px;font-weight:400;color:#3fc25a;letter-spacing:0.000px;-webkit-text-stroke:0.5px #3fc25a'>+ 16</span>
<span class='t z7' style='left:917.30px;top:437.90px;font-family:"Liberation Sans", sans-serif;font-size:11.5px;font-weight:400;color:#fff;letter-spacing:-0.277px;-webkit-text-stroke:0.45px #fff'>2 Stars</span>
<span class='t z7' style='left:1021.98px;top:437.90px;font-family:"Liberation Sans", sans-serif;font-size:12px;font-weight:400;color:#3fc25a;letter-spacing:0.000px;-webkit-text-stroke:0.5px #3fc25a'>+ 5</span>
<span class='t z7' style='left:917.30px;top:463.80px;font-family:"Liberation Sans", sans-serif;font-size:11.5px;font-weight:400;color:#fff;letter-spacing:-0.231px;-webkit-text-stroke:0.45px #fff'>1 Star</span>
<span class='t z7' style='left:1015.30px;top:463.80px;font-family:"Liberation Sans", sans-serif;font-size:12px;font-weight:400;color:#3fc25a;letter-spacing:0.000px;-webkit-text-stroke:0.5px #3fc25a'>+ 16</span>
<span class='t z7' style='left:906.00px;top:499.80px;font-family:"Liberation Sans", sans-serif;font-size:11.5px;font-weight:400;color:#fff;letter-spacing:-0.089px;-webkit-text-stroke:0.45px #fff'>Deleted Ratings</span>
<span class='t z7' style='left:1032.31px;top:499.80px;font-family:"Liberation Sans", sans-serif;font-size:12px;font-weight:400;color:#fff;letter-spacing:0.000px;-webkit-text-stroke:0.5px #fff'>0</span>
<span class='t z7' style='left:906.00px;top:525.80px;font-family:"Liberation Sans", sans-serif;font-size:11.5px;font-weight:400;color:#fff;letter-spacing:-0.109px;-webkit-text-stroke:0.45px #fff'>New Ratings</span>
<span class='t z7' style='left:1018.97px;top:525.80px;font-family:"Liberation Sans", sans-serif;font-size:12px;font-weight:400;color:#fff;letter-spacing:0.000px;-webkit-text-stroke:0.5px #fff'>336</span>
</div></div>
</body></html>
